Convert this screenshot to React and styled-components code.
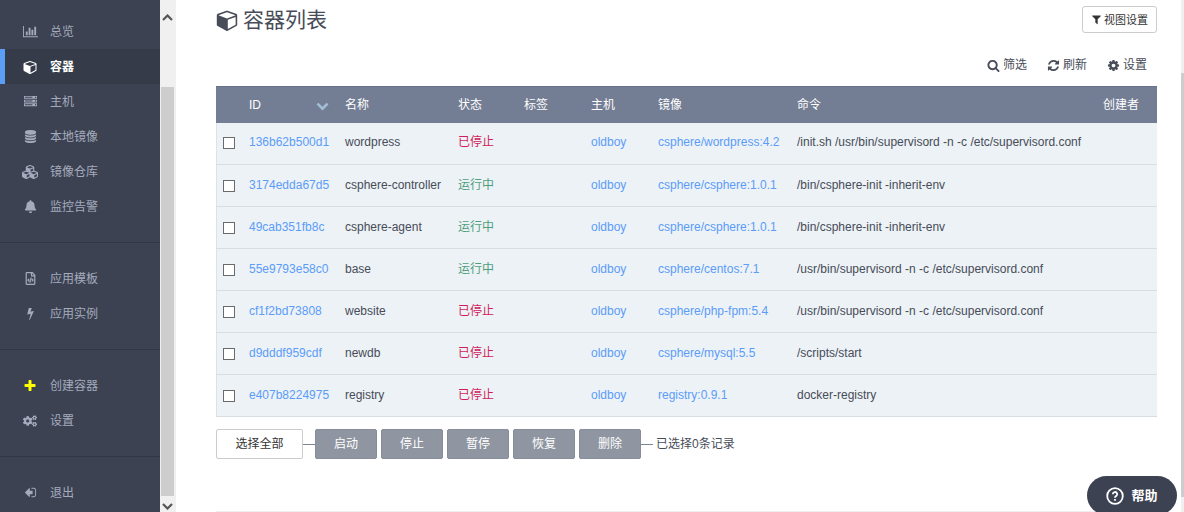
import React, {useState} from 'react';
import styled, {createGlobalStyle} from 'styled-components';
import {FaBell, FaCogs, FaCubes, FaRegFileCode} from 'react-icons/fa';


const GlobalStyle = createGlobalStyle`
    *{
        box-sizing: border-box;
    }
    body{
        margin: 0;
        overflow: hidden;
        background: #fff;
        color: #474c58;
        font: 12px/18px "Liberation Sans", "Noto Sans CJK SC", sans-serif;
    }
    button{
        font: inherit;
        cursor: pointer;
    }
    a{
        text-decoration: none;
    }
`;
const Page = styled.div`
    display: flex;
    height: 100vh;
`;
const Sidebar = styled.nav`
    flex: 0 0 160px;
    padding-top: 14px;
    background: #3c4252;
    overflow: hidden;
`;
const MenuGroup = styled.ul`
    list-style: none;
    margin: 0;
    padding: 0 0 18px;
    & + &{
        padding-top: 18px;
        border-top: 1px solid #303644;
    }
`;
const MenuLink = styled.a`
    display: flex;
    align-items: center;
    height: 35px;
    padding-left: ${props => props.$active ? "17px" : "22px"};
    border-left: ${props => props.$active ? "5px solid #5a9ff5" : "none"};
    background: ${props => props.$active ? "#353b48" : "none"};
    color: ${props => props.$active ? "#fff" : "#a4abbd"};
    font-weight: ${props => props.$active ? "bold" : "normal"};
`;
const MenuIcon = styled.span`
    display: flex;
    justify-content: center;
    width: 16px;
    margin-right: 12px;
    color: ${props => props.$color || "inherit"};
`;
const MenuText = styled.span`
    font-size: 12px;
`;
const Track = styled.div`
    display: flex;
    flex-direction: column;
    align-items: center;
    flex: 0 0 ${props => props.$wide ? "16px" : "3px"};
    background: #f0f0f0;
`;
const TrackGap = styled.div`
    flex: ${props => props.$grow} 0 0;
`;
const Thumb = styled.div`
    flex: ${props => props.$grow} 0 0;
    width: ${props => props.$wide ? "13px" : "100%"};
    margin-right: ${props => props.$wide ? "1px" : "0"};
    background: #cdcdcd;
`;
const Arrow = styled.svg`
    display: block;
    flex: none;
    width: 11px;
    height: 7px;
    margin: ${props => props.$up ? "14px 0 2px" : "7px 0 2px"};
    margin-right: 1px;
`;
const Main = styled.main`
    flex: 1;
    min-width: 0;
    padding: 6px 24px 0 40px;
    overflow: hidden;
`;
const Header = styled.header`
    display: flex;
    align-items: flex-start;
    justify-content: space-between;
`;
const Title = styled.h1`
    display: flex;
    align-items: center;
    gap: 5px;
    margin: 0;
    font-size: 21px;
    line-height: 27px;
    font-weight: normal;
`;
const ViewButton = styled.button`
    display: flex;
    align-items: center;
    gap: 2px;
    height: 27px;
    padding: 0 8px;
    border: 1px solid #ccc;
    border-radius: 3px;
    background: #fff;
    color: #333;
    font-size: 11px;
`;
const Tools = styled.div`
    display: flex;
    justify-content: flex-end;
    gap: 20px;
    padding: 23px 10px 12px 0;
`;
const ToolButton = styled.button`
    display: flex;
    align-items: center;
    gap: 3px;
    padding: 0;
    border: none;
    background: none;
    color: #474c58;
`;
const Table = styled.table`
    width: 100%;
    table-layout: fixed;
    border-collapse: collapse;
    text-align: left;
    white-space: nowrap;
`;
const HeadCell = styled.th`
    width: ${props => props.$width ? props.$width + "px" : "auto"};
    height: 36px;
    padding: 1px 7px 0;
    background: #737d93;
    border-top: 1px solid #68728a;
    color: #fff;
    font-weight: normal;
`;
const SortHead = styled.span`
    display: flex;
    align-items: center;
    justify-content: space-between;
    padding-right: 2px;
`;
const Row = styled.tr`
    height: 42px;
    background: #edf2f6;
    border-bottom: 1px solid #d8dde2;
    box-shadow: inset 1px 0 #dce2e9;
`;
const Cell = styled.td`
    padding: 0 7px 2px;
    color: ${props => props.$color || "inherit"};
`;
const CellLink = styled.a`
    color: #5b9cf8;
`;
const Checkbox = styled.input`
    appearance: none;
    display: block;
    width: 12px;
    height: 12px;
    margin: 2px 0 0;
    border: 1px solid #6b6b6b;
    background: #fff;
    &:checked{
        background: #5b9cf8;
    }
`;
const Actions = styled.div`
    display: flex;
    align-items: center;
    padding-bottom: 52px;
    margin-top: 12px;
    border-bottom: 1px solid #eee;
`;
const ActionButton = styled.button`
    height: 30px;
    min-width: ${props => props.$light ? "87px" : "62px"};
    padding: 0 16px;
    border: 1px solid ${props => props.$light ? "#ccc" : "#868c98"};
    border-radius: 2px;
    background: ${props => props.$light ? "#fff" : "#9096a1"};
    color: ${props => props.$light ? "#333" : "#fff"};
    & + &{
        margin-left: 4px;
    }
`;
const Line = styled.span`
    width: 12px;
    height: 1px;
    background: #7d8491;
`;
const Count = styled.span`
    margin-left: 3px;
`;
const HelpButton = styled.button`
    position: fixed;
    right: 7px;
    bottom: -3px;
    display: flex;
    align-items: center;
    justify-content: center;
    gap: 7px;
    width: 90px;
    height: 39px;
    border: none;
    border-radius: 20px;
    background: #3c4252;
    color: #fff;
    font-size: 13px;
    font-weight: bold;
`;


const paths = {
    chart: "M640 896v512h-256v-512h256zm384-512v1024h-256v-1024h256zm1024 1152v128h-2048v-1536h128v1408h1920zm-640-896v768h-256v-768h256zm384-384v1152h-256v-1152h256z",
    cube: "M896 1629l640-349v-636l-640 233v752zm-64-865l698-254-698-254-698 254zm832-252v768q0 35-18 65t-49 47l-704 384q-28 16-61 16t-61-16l-704-384q-31-17-49-47t-18-65v-768q0-40 23-73t61-47l704-256q22-8 44-8t44 8l704 256q38 14 61 47t23 73z",
    server: "M128 1408h1024v-128h-1024v128zm0-512h1024v-128h-1024v128zm1568 448q0-40-28-68t-68-28-68 28-28 68 28 68 68 28 68-28 28-68zm-1568-960h1024v-128h-1024v128zm1568 448q0-40-28-68t-68-28-68 28-28 68 28 68 68 28 68-28 28-68zm0-512q0-40-28-68t-68-28-68 28-28 68 28 68 68 28 68-28 28-68zm96 832v384h-1792v-384h1792zm0-512v384h-1792v-384h1792zm0-512v384h-1792v-384h1792z",
    database: "M768 768q237 0 443-43t325-127v170q0 69-103 128t-280 93.5-385 34.5-385-34.5-280-93.5-103-128v-170q119 84 325 127t443 43zm0 768q237 0 443-43t325-127v170q0 69-103 128t-280 93.5-385 34.5-385-34.5-280-93.5-103-128v-170q119 84 325 127t443 43zm0-384q237 0 443-43t325-127v170q0 69-103 128t-280 93.5-385 34.5-385-34.5-280-93.5-103-128v-170q119 84 325 127t443 43zm0-1152q208 0 385 34.5t280 93.5 103 128v128q0 69-103 128t-280 93.5-385 34.5-385-34.5-280-93.5-103-128v-128q0-69 103-128t280-93.5 385-34.5z",
    bolt: "M1333 566q18 20 7 44l-540 1157q-13 25-42 25-4 0-14-2-17-5-25.5-19t-4.5-30l197-808-406 101q-4 1-12 1-18 0-31-11-18-15-13-39l201-825q4-14 16-23t28-9h328q19 0 32 12.5t13 29.5q0 8-5 18l-171 463 396-98q8-2 12-2 19 0 34 15z",
    plus: "M1600 736v192q0 40-28 68t-68 28h-416v416q0 40-28 68t-68 28h-192q-40 0-68-28t-28-68v-416h-416q-40 0-68-28t-28-68v-192q0-40 28-68t68-28h416v-416q0-40 28-68t68-28h192q40 0 68 28t28 68v416h416q40 0 68 28t28 68z",
    exit: "M128 896q0 26 19 45l544 544q19 19 45 19t45-19 19-45v-288h320q26 0 45-19t19-45v-384q0-26-19-45t-45-19h-320v-288q0-26-19-45t-45-19-45 19l-544 544q-19 19-19 45zm1536-352v704q0 119-84.5 203.5t-203.5 84.5h-320q-13 0-22.5-9.5t-9.5-22.5v-64q0-32 32-32h320q66 0 113-47t47-113v-704q0-66-47-113t-113-47h-320q-32 0-32-32v-64q0-32 32-32h320q119 0 203.5 84.5t84.5 203.5z",
    filter: "M1595 295q17 41-14 70l-493 493v742q0 42-39 59-13 5-25 5-27 0-45-19l-256-256q-19-19-19-45v-486l-493-493q-31-29-14-70 17-39 59-39h1280q42 0 59 39z",
    search: "M1216 832q0-185-131.5-316.5t-316.5-131.5-316.5 131.5-131.5 316.5 131.5 316.5 316.5 131.5 316.5-131.5 131.5-316.5zm512 832q0 52-38 90t-90 38q-54 0-90-38l-343-342q-179 124-399 124-143 0-273.5-55.5t-225-150-150-225-55.5-273.5 55.5-273.5 150-225 225-150 273.5-55.5 273.5 55.5 225 150 150 225 55.5 273.5q0 220-124 399l343 343q37 37 37 90z",
    refresh: "M1639 1056q0 5-1 7-64 268-268 434.5t-478 166.5q-146 0-282.5-55t-243.5-157l-129 129q-19 19-45 19t-45-19-19-45v-448q0-26 19-45t45-19h448q26 0 45 19t19 45-19 45l-137 137q71 66 161 102t187 36q134 0 250-65t186-179q11-17 53-117 8-23 30-23h192q13 0 22.5 9.5t9.5 22.5zm25-800v448q0 26-19 45t-45 19h-448q-26 0-45-19t-19-45 19-45l138-138q-148-137-349-137-134 0-250 65t-186 179q-11 17-53 117-8 23-30 23h-199q-13 0-22.5-9.5t-9.5-22.5v-7q65-268 270-434.5t480-166.5q146 0 284 55.5t245 156.5l130-129q19-19 45-19t45 19 19 45z",
    cog: "M1152 896q0-106-75-181t-181-75-181 75-75 181 75 181 181 75 181-75 75-181zm512-109v222q0 12-8 23t-20 13l-185 28q-19 54-39 91 35 50 107 138 10 12 10 25t-9 23q-27 37-99 108t-94 71q-12 0-26-9l-138-108q-44 23-91 38-16 136-29 186-7 28-36 28h-222q-14 0-24.5-8.5t-11.5-21.5l-28-184q-49-16-90-37l-141 107q-10 9-25 9-14 0-25-11-126-114-165-168-7-10-7-23 0-12 8-23 15-21 51-66.5t54-70.5q-27-50-41-99l-183-27q-13-2-21-12.5t-8-23.5v-222q0-12 8-23t19-13l186-28q14-46 39-92-40-57-107-138-10-12-10-24 0-10 9-23 26-36 98.5-107.5t94.5-71.5q13 0 26 10l138 107q44-23 91-38 16-136 29-186 7-28 36-28h222q14 0 24.5 8.5t11.5 21.5l28 184q49 16 90 37l142-107q9-9 24-9 13 0 25 10 129 119 165 170 7 8 7 22 0 12-8 23-15 21-51 66.5t-54 70.5q26 50 41 98l183 28q13 2 21 12.5t8 23.5z",
    down: "M1683 808l-742 741q-19 19-45 19t-45-19l-742-741q-19-19-19-45.5t19-45.5l166-165q19-19 45-19t45 19l531 531 531-531q19-19 45-19t45 19l166 165q19 19 19 45.5t-19 45.5z"
};

function Icon({name, size, box = "0 0 1792 1792"}) {
    return (
        <svg width={size} height={size} viewBox={box} fill="currentColor" aria-hidden="true">
            <path d={paths[name]}/>
        </svg>
    );
}

const menu = [
    [
        {text: "总览", icon: <Icon name="chart" size={15} box="0 0 2048 1792"/>},
        {text: "容器", icon: <Icon name="cube" size={14} box="0 0 1664 1792"/>, active: true},
        {text: "主机", icon: <Icon name="server" size={13}/>},
        {text: "本地镜像", icon: <Icon name="database" size={13} box="0 0 1536 1792"/>},
        {text: "镜像仓库", icon: <FaCubes size={16}/>},
        {text: "监控告警", icon: <FaBell size={13}/>}
    ],
    [
        {text: "应用模板", icon: <FaRegFileCode size={13}/>},
        {text: "应用实例", icon: <Icon name="bolt" size={13}/>}
    ],
    [
        {text: "创建容器", icon: <Icon name="plus" size={14}/>, color: "#ffff00"},
        {text: "设置", icon: <FaCogs size={14}/>}
    ],
    [
        {text: "退出", icon: <Icon name="exit" size={13}/>}
    ]
];

const containers = [
    {id: "136b62b500d1", name: "wordpress", running: false, image: "csphere/wordpress:4.2", command: "/init.sh /usr/bin/supervisord -n -c /etc/supervisord.conf"},
    {id: "3174edda67d5", name: "csphere-controller", running: true, image: "csphere/csphere:1.0.1", command: "/bin/csphere-init -inherit-env"},
    {id: "49cab351fb8c", name: "csphere-agent", running: true, image: "csphere/csphere:1.0.1", command: "/bin/csphere-init -inherit-env"},
    {id: "55e9793e58c0", name: "base", running: true, image: "csphere/centos:7.1", command: "/usr/bin/supervisord -n -c /etc/supervisord.conf"},
    {id: "cf1f2bd73808", name: "website", running: false, image: "csphere/php-fpm:5.4", command: "/usr/bin/supervisord -n -c /etc/supervisord.conf"},
    {id: "d9dddf959cdf", name: "newdb", running: false, image: "csphere/mysql:5.5", command: "/scripts/start"},
    {id: "e407b8224975", name: "registry", running: false, image: "registry:0.9.1", command: "docker-registry"}
];

function ContainerTable({selected, onToggle}) {
    return (
        <Table>
            <thead>
                <tr>
                    <HeadCell $width={26}/>
                    <HeadCell $width={96}>
                        <SortHead>ID <SortIcon/></SortHead>
                    </HeadCell>
                    <HeadCell $width={113}>名称</HeadCell>
                    <HeadCell $width={66}>状态</HeadCell>
                    <HeadCell $width={67}>标签</HeadCell>
                    <HeadCell $width={67}>主机</HeadCell>
                    <HeadCell $width={139}>镜像</HeadCell>
                    <HeadCell>命令</HeadCell>
                    <HeadCell $width={61}>创建者</HeadCell>
                </tr>
            </thead>
            <tbody>
                {containers.map(item => (
                    <Row key={item.id}>
                        <Cell>
                            <Checkbox type="checkbox" aria-label={item.name}
                                      checked={selected.includes(item.id)}
                                      onChange={() => onToggle(item.id)}/>
                        </Cell>
                        <Cell><CellLink href={"#" + item.id}>{item.id}</CellLink></Cell>
                        <Cell>{item.name}</Cell>
                        <Cell $color={item.running ? "#4f9e7c" : "#cf1d5b"}>{item.running ? "运行中" : "已停止"}</Cell>
                        <Cell/>
                        <Cell><CellLink href="#oldboy">oldboy</CellLink></Cell>
                        <Cell><CellLink href={"#" + item.image}>{item.image}</CellLink></Cell>
                        <Cell>{item.command}</Cell>
                        <Cell/>
                    </Row>
                ))}
            </tbody>
        </Table>
    );
}

const SortColor = styled.span`
    display: flex;
    color: #a3bdd6;
`;

function SortIcon() {
    return <SortColor><Icon name="down" size={13}/></SortColor>;
}

function App() {
    const [selected, setSelected] = useState([]);

    function toggle(id) {
        setSelected(selected.includes(id) ? selected.filter(x => x !== id) : [...selected, id]);
    }

    return (
        <Page>
            <GlobalStyle/>
            <Sidebar>
                {menu.map((group, i) => (
                    <MenuGroup key={i}>
                        {group.map(item => (
                            <li key={item.text}>
                                <MenuLink href="#" $active={item.active}>
                                    <MenuIcon $color={item.color}>{item.icon}</MenuIcon>
                                    <MenuText>{item.text}</MenuText>
                                </MenuLink>
                            </li>
                        ))}
                    </MenuGroup>
                ))}
            </Sidebar>
            <Track $wide>
                <Arrow $up viewBox="0 0 11 7"><path d="M1 6l4.5-4.5L10 6" fill="none" stroke="#555" strokeWidth="2.2"/></Arrow>
                <TrackGap $grow={64}/>
                <Thumb $wide $grow={409}/>
                <Arrow viewBox="0 0 11 7"><path d="M1 1l4.5 4.5L10 1" fill="none" stroke="#555" strokeWidth="2.2"/></Arrow>
            </Track>
            <Main>
                <Header>
                    <Title><Icon name="cube" size={22} box="0 0 1664 1792"/>容器列表</Title>
                    <ViewButton><Icon name="filter" size={11}/>视图设置</ViewButton>
                </Header>
                <Tools>
                    <ToolButton><Icon name="search" size={13}/>筛选</ToolButton>
                    <ToolButton><Icon name="refresh" size={13}/>刷新</ToolButton>
                    <ToolButton><Icon name="cog" size={13}/>设置</ToolButton>
                </Tools>
                <ContainerTable selected={selected} onToggle={toggle}/>
                <Actions>
                    <ActionButton $light onClick={() => setSelected(containers.map(x => x.id))}>选择全部</ActionButton>
                    <Line/>
                    <ActionButton>启动</ActionButton>
                    <ActionButton>停止</ActionButton>
                    <ActionButton>暂停</ActionButton>
                    <ActionButton>恢复</ActionButton>
                    <ActionButton>删除</ActionButton>
                    <Line/>
                    <Count>已选择{selected.length}条记录</Count>
                </Actions>
            </Main>
            <Track>
                <TrackGap $grow={73}/>
                <Thumb $grow={424}/>
                <TrackGap $grow={15}/>
            </Track>
            <HelpButton>
                <svg width="18" height="18" viewBox="0 0 18 18" fill="none" stroke="currentColor" strokeWidth="1.8" aria-hidden="true">
                    <circle cx="9" cy="9" r="7.8"/>
                    <path d="M6.8 7.2a2.2 2.2 0 1 1 3.3 1.9c-.8.5-1.1.8-1.1 1.700"/>
                    <path d="M9 12v1.7"/>
                </svg>
                帮助
            </HelpButton>
        </Page>
    );
}

export default App;
